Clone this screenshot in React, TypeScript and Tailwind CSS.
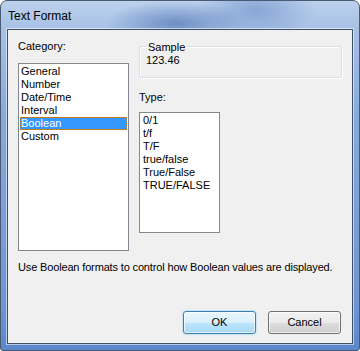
import React from "react";

const categories = ["General", "Number", "Date/Time", "Interval", "Boolean", "Custom"];
const types = ["0/1", "t/f", "T/F", "true/false", "True/False", "TRUE/FALSE"];

export default function App() {
  return (
    <div
      className="w-[360px] h-[351px] flex flex-col px-[6px] pb-[6px] rounded-t-[7px] rounded-b-[3px] border border-[#4a5a72] bg-[radial-gradient(ellipse_70px_22px_at_175px_22px,rgba(60,100,170,0.55),transparent),radial-gradient(ellipse_60px_30px_at_255px_8px,rgba(80,120,190,0.45),transparent),linear-gradient(to_bottom,#bcd1ec_0px,#a7c1e5_28px,#86a8dc_120px,#6f96d3_300px,#5c86cb_351px)] text-[11px] text-black"
      style={{ fontFamily: '"Liberation Sans", Arial, sans-serif' }}
    >
      <div className="h-[28px] flex items-center pl-[1px] pt-[2px] text-[12px] text-black">
        Text Format
      </div>
      <div className="flex-1 border border-[#3e5068] shadow-[0_0_0_1px_rgba(255,255,255,0.55)] bg-[#f0f0f0] flex flex-col">
        <div className="flex pl-[10px] pt-[10px]">
          {/* Left column */}
          <div className="flex flex-col w-[111px]">
            <div className="leading-[13px] h-[13px]">Category:</div>
            <div className="mt-[10px] h-[188px] border border-[#828790] bg-white p-[1px] flex flex-col">
              {categories.map((c) => (
                <div
                  key={c}
                  className={
                    "h-[13px] leading-[13px] pl-[1px] whitespace-nowrap " +
                    (c === "Boolean" ? "bg-[#3399ff] text-white outline-1 outline-dotted outline-[#cc7a1e] -outline-offset-1" : "")
                  }
                >
                  {c}
                </div>
              ))}
            </div>
          </div>
          {/* Right column */}
          <div className="flex flex-col ml-[10px]">
            <div className="relative mt-[6px] w-[203px] h-[32px] rounded-[3px] border border-[#d5dfe5] shadow-[inset_1px_1px_0_#ffffff,1px_1px_0_#ffffff]">
              <div className="absolute left-[7px] -top-[6px] px-[1px] bg-[#f0f0f0] leading-[13px]">Sample</div>
              <div className="absolute left-[6px] top-[7px] leading-[13px]">123.46</div>
            </div>
            <div className="mt-[13px] leading-[13px] h-[13px]">Type:</div>
            <div className="mt-[8px] w-[81px] h-[121px] border border-[#828790] bg-white p-[1px] flex flex-col">
              {types.map((t) => (
                <div key={t} className="h-[13px] leading-[13px] pl-[2px] whitespace-nowrap">
                  {t}
                </div>
              ))}
            </div>
          </div>
        </div>
        <div className="pl-[10px] mt-[10px] leading-[13px] tracking-[-0.15px]">
          Use Boolean formats to control how Boolean values are displayed.
        </div>
        <div className="flex justify-end gap-[12px] pr-[11px] mt-auto mb-[9px]">
          <button className="w-[73px] h-[23px] rounded-[3px] border border-[#3c7fb1] bg-[linear-gradient(to_bottom,#eaf6fd_0%,#d9f0fc_50%,#bee6fd_50%,#a7d9f5_100%)] shadow-[inset_0_0_0_1px_rgba(255,255,255,0.7),0_0_2px_#6cc6f0] leading-[13px]">
            OK
          </button>
          <button className="w-[73px] h-[23px] rounded-[3px] border border-[#707070] bg-[linear-gradient(to_bottom,#f2f2f2_0%,#ebebeb_50%,#dddddd_50%,#cfcfcf_100%)] shadow-[inset_0_0_0_1px_rgba(255,255,255,0.7)] leading-[13px]">
            Cancel
          </button>
        </div>
      </div>
    </div>
  );
}
